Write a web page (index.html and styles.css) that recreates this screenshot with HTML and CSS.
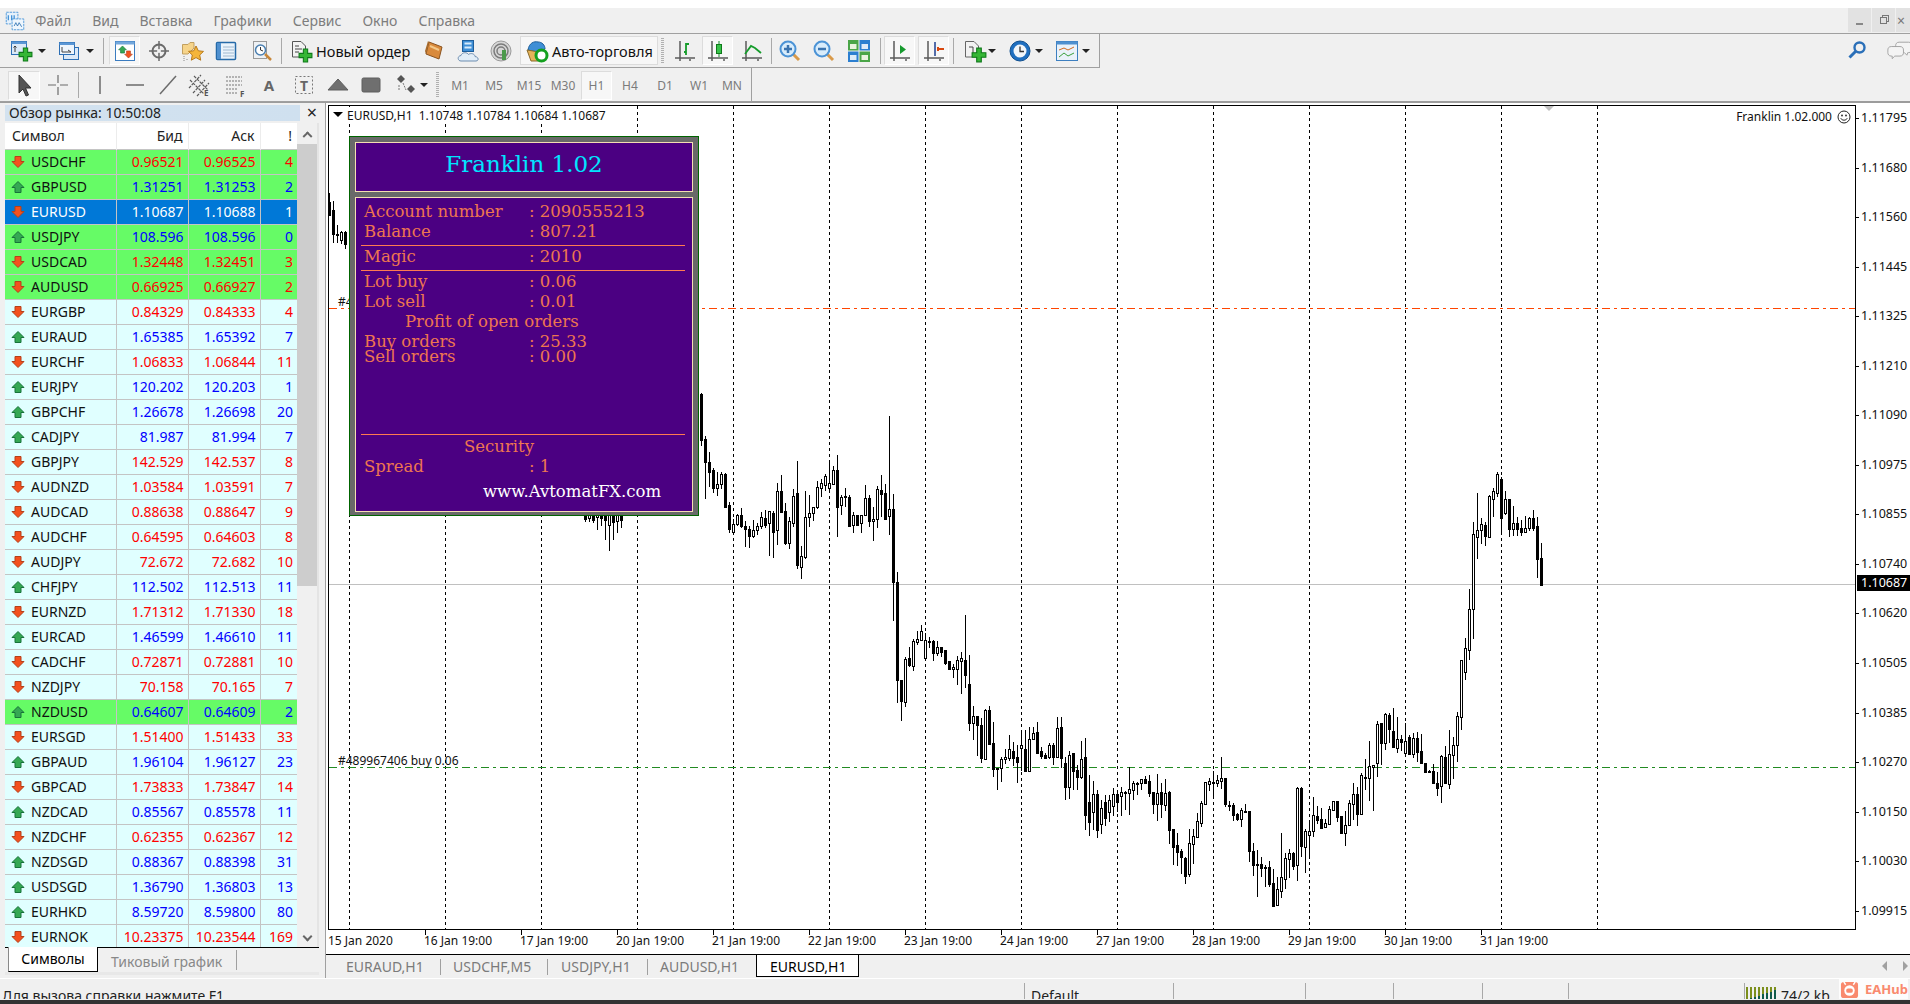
FILE: index.html
```html
<!DOCTYPE html>
<html lang="ru">
<head>
<meta charset="utf-8">
<title>MetaTrader 4</title>
<link rel="stylesheet" href="styles.css">
</head>
<body>
<svg class="defs" aria-hidden="true">
  <defs>
    <symbol id="up" viewBox="0 0 14 14"><path d="M7 1.5 13 7.5H10V12.5H4V7.5H1Z" fill="#35a853" stroke="#17733a"/></symbol>
    <symbol id="dn" viewBox="0 0 14 14"><path d="M4 1.5H10V6.5H13L7 12.5 1 6.5H4Z" fill="#f4511e" stroke="#b5401a"/></symbol>
    <symbol id="plus" viewBox="0 0 14 14"><path d="M5 1H9V5H13V9H9V13H5V9H1V5H5Z" fill="#35b635" stroke="#0f7a1a"/></symbol>
    <symbol id="newchart" viewBox="0 0 24 24"><rect x="1.5" y="2.5" width="15" height="13" fill="#dbe9f8" stroke="#2d6fb5"/><rect x="1.5" y="2.5" width="15" height="2.5" fill="#5b97d5"/><path d="M5 7V13M3.5 8.5 5 7 6.500 8.500" fill="none" stroke="#3a3a3a"/><use href="#plus" x="8" y="8" width="15" height="15"/></symbol>
    <symbol id="profiles" viewBox="0 0 24 24"><rect x="6.500" y="8.500" width="15" height="12" fill="#dbe9f8" stroke="#2d6fb5"/><rect x="2.500" y="3.500" width="15" height="12" fill="#eef5fc" stroke="#2d6fb5"/><rect x="2.500" y="3.500" width="15" height="2.500" fill="#5b97d5"/><path d="M5 8V13H14M11 11 14 13" fill="none" stroke="#444"/></symbol>
    <symbol id="watch" viewBox="0 0 24 24"><rect x="2.500" y="2.500" width="19" height="19" fill="#fff" stroke="#3b7cc0"/><rect x="2.500" y="2.500" width="19" height="3" fill="#74a8dc"/><use href="#up" x="5" y="6" width="9" height="9"/><use href="#dn" x="11" y="11" width="9" height="9"/></symbol>
    <symbol id="nav" viewBox="0 0 24 24"><circle cx="12" cy="12" r="6.500" fill="none" stroke="#6b6b6b" stroke-width="2"/><path d="M12 2V22M2 12H22" stroke="#6b6b6b" stroke-width="1.500"/><circle cx="12" cy="12" r="2" fill="#f0f0f0"/></symbol>
    <symbol id="star" viewBox="0 0 24 24"><path d="M1.500 5.500H7L9 3.500H13V9L7 15H1.500Z" fill="#f6d48a" stroke="#c2a060"/><path d="M15 7 17.300 11.800 22.500 12.400 18.700 16 19.700 21.200 15 18.600 10.300 21.200 11.300 16 7.500 12.400 12.700 11.800Z" fill="#f5b53a" stroke="#b87a1c"/><path d="M3 17V22M6 20V22" stroke="#888" stroke-dasharray="1 1"/></symbol>
    <symbol id="term" viewBox="0 0 24 24"><rect x="2.500" y="3.500" width="19" height="17" rx="1" fill="#eaf3fb" stroke="#256aa8" stroke-width="1.500"/><rect x="3" y="4" width="4" height="16" fill="#4f90cf"/><path d="M9 8H20M9 11H20M9 14H20M9 17H20" stroke="#9fb8cf"/></symbol>
    <symbol id="tester" viewBox="0 0 24 24"><rect x="3.500" y="2.500" width="13" height="17" fill="#eef1f4" stroke="#9a9a9a"/><circle cx="10.500" cy="11" r="5" fill="#fff" stroke="#4a7fb0" stroke-width="1.500"/><path d="M10.500 8V11L13 12" fill="none" stroke="#333"/><path d="M15 15 21 21" stroke="#c8873a" stroke-width="2.500"/></symbol>
    <symbol id="order" viewBox="0 0 24 24"><path d="M3.500 2.500H12L16.500 7V18H3.500Z" fill="#f2f2f2" stroke="#555"/><path d="M6 7H10M6 10H13M6 13H10" stroke="#444"/><use href="#plus" x="9" y="9" width="15" height="15"/></symbol>
    <symbol id="book" viewBox="0 0 24 24"><path d="M7 3 20 8 17 20 4 15Z" fill="#d98a3c" stroke="#8a5320"/><path d="M7 3 4 15 3 12 6 2Z" fill="#a86a2a"/><path d="M8 7 17 11" stroke="#f3c98a" stroke-width="2"/></symbol>
    <symbol id="cloud" viewBox="0 0 24 24"><rect x="6.500" y="1.500" width="11" height="11" fill="#3f8fd6" stroke="#1e5f9c"/><rect x="8.500" y="3.500" width="7" height="2" fill="#d8ecfb"/><rect x="8.500" y="7.500" width="7" height="2" fill="#d8ecfb"/><path d="M5 22C1.500 22 1 17 5 16.500 6 13 11 13 12.500 15.500 15 13.500 19 15 19 17.500 23 18 23 22 20 22Z" fill="#e2eef8" stroke="#6d8db0"/></symbol>
    <symbol id="signal" viewBox="0 0 24 24"><circle cx="12" cy="12" r="10" fill="#d7d7d7" stroke="#9a9a9a"/><circle cx="12" cy="12" r="7" fill="none" stroke="#7b7b7b" stroke-width="1.500"/><circle cx="12" cy="12" r="4" fill="none" stroke="#7b7b7b" stroke-width="1.500"/><path d="M13 11H17V21H13Z" fill="#4c9a4c"/></symbol>
    <symbol id="auto" viewBox="0 0 24 24"><path d="M3 11C4 4 9 2 13 3 17 3 20 6 20 10L12 13Z" fill="#3f8fd6" stroke="#1e5f9c"/><path d="M2 11 14 13 13 22H6Z" fill="#e6b45a" stroke="#8a6a2a"/><circle cx="16.500" cy="16.500" r="5.500" fill="#fff" stroke="#14a01e" stroke-width="3"/></symbol>
    <symbol id="barch" viewBox="0 0 24 24"><path d="M7 2V20M2 19H22M17 20V22M7 20V22" stroke="#5b5b5b" stroke-width="1.500" fill="none"/><path d="M13 16V5H16M11 13H13" stroke="#159c2b" stroke-width="1.800" fill="none"/></symbol>
    <symbol id="candle" viewBox="0 0 24 24"><path d="M6 2V20M2 19H22M6 20V22M18 20V22" stroke="#5b5b5b" stroke-width="1.500" fill="none"/><path d="M13 2V18" stroke="#158a2b"/><rect x="10.500" y="5.500" width="5" height="9" fill="#37c24a" stroke="#0f7a1a"/></symbol>
    <symbol id="linech" viewBox="0 0 24 24"><path d="M6 2V20M2 19H22M6 20V22M18 20V22" stroke="#5b5b5b" stroke-width="1.500" fill="none"/><path d="M5 15 11 7 15 9 21 14" stroke="#159c2b" stroke-width="1.800" fill="none"/></symbol>
    <symbol id="zoomin" viewBox="0 0 24 24"><path d="M14 14 21 21" stroke="#d99a4a" stroke-width="3"/><circle cx="10" cy="10" r="7.500" fill="#d8ecfb" stroke="#4b93d6" stroke-width="2"/><path d="M6 10H14M10 6V14" stroke="#3a74b0" stroke-width="2.500"/></symbol>
    <symbol id="zoomout" viewBox="0 0 24 24"><path d="M14 14 21 21" stroke="#d99a4a" stroke-width="3"/><circle cx="10" cy="10" r="7.500" fill="#d8ecfb" stroke="#4b93d6" stroke-width="2"/><path d="M6 10H14" stroke="#3a74b0" stroke-width="2.500"/></symbol>
    <symbol id="tile" viewBox="0 0 24 24"><rect x="1" y="1" width="10.500" height="10.500" fill="#4aa548"/><rect x="12.500" y="1" width="10.500" height="10.500" fill="#2c7fd0"/><rect x="1" y="12.500" width="10.500" height="10.500" fill="#2c7fd0"/><rect x="12.500" y="12.500" width="10.500" height="10.500" fill="#4aa548"/><rect x="3" y="5" width="6.500" height="5" fill="#e9f3df"/><rect x="14.500" y="5" width="6.500" height="5" fill="#deebf8"/><rect x="3" y="16" width="6.500" height="5" fill="#deebf8"/><rect x="14.500" y="16" width="6.500" height="5" fill="#e9f3df"/></symbol>
    <symbol id="scroll" viewBox="0 0 24 24"><path d="M6 2V20M2 19H22M6 20V22M18 20V22" stroke="#5b5b5b" stroke-width="1.500" fill="none"/><path d="M12 6V15L18 10.500Z" fill="#169a2e"/></symbol>
    <symbol id="shift" viewBox="0 0 24 24"><path d="M6 2V20M2 19H22M6 20V22M18 20V22" stroke="#5b5b5b" stroke-width="1.500" fill="none"/><path d="M13 3V17" stroke="#1e3f90" stroke-width="1.500"/><path d="M22 10H16M16 8V12" stroke="#d9480f" stroke-width="2"/></symbol>
    <symbol id="tmpl" viewBox="0 0 24 24"><path d="M2.500 2.500H11L15.500 7V18H2.500Z" fill="#f2f2f2" stroke="#666"/><path d="M6 8H10V15" fill="none" stroke="#444"/><use href="#plus" x="8" y="8" width="16" height="16"/></symbol>
    <symbol id="clock" viewBox="0 0 24 24"><circle cx="12" cy="12" r="10" fill="#1f6fc0" stroke="#12508f"/><circle cx="12" cy="12" r="6.500" fill="#f2f6fa"/><path d="M12 7.500V12.500H16" fill="none" stroke="#333" stroke-width="1.300"/></symbol>
    <symbol id="indic" viewBox="0 0 24 24"><rect x="1.500" y="2.500" width="21" height="19" fill="#eaf2fa" stroke="#3d7fc0"/><rect x="1.500" y="2.500" width="21" height="3" fill="#4f90cf"/><path d="M4 11 9 9 13 11 19 8" stroke="#d2691e" fill="none"/><path d="M4 18 9 14 13 17 19 14" stroke="#3ca03c" fill="none"/></symbol>
    <symbol id="cursor" viewBox="0 0 24 24"><path d="M7 2V20L11 16 14 23 16.500 22 13.500 15H19Z" fill="#555" stroke="#333"/></symbol>
    <symbol id="cross" viewBox="0 0 24 24"><path d="M12 2V10M12 14V22M2 12H10M14 12H22" stroke="#6b6b6b" stroke-width="1.200"/></symbol>
    <symbol id="vline" viewBox="0 0 24 24"><path d="M12 3V21" stroke="#6b6b6b" stroke-width="1.500"/></symbol>
    <symbol id="hline" viewBox="0 0 24 24"><path d="M3 12H21" stroke="#6b6b6b" stroke-width="1.500"/></symbol>
    <symbol id="trend" viewBox="0 0 24 24"><path d="M4 21 20 3" stroke="#6b6b6b" stroke-width="1.500"/></symbol>
    <symbol id="channel" viewBox="0 0 24 24"><path d="M1 15 13 2M5 20 17 7M9 23 21 10M2 7 16 21M6 3 20 17" stroke="#5b5b5b" stroke-width="1.200" stroke-dasharray="3 1"/><text x="16" y="23" class="ic-t">E</text></symbol>
    <symbol id="fibo" viewBox="0 0 24 24"><path d="M2 4H18M2 8H18M2 12H18M2 16H14M2 20H14" stroke="#777" stroke-dasharray="2 1" stroke-width="1.200"/><text x="16" y="24" class="ic-t">F</text></symbol>
    <symbol id="tframe" viewBox="0 0 24 24"><rect x="3.500" y="3.500" width="17" height="17" fill="none" stroke="#777" stroke-dasharray="2 2"/><text x="12" y="18" class="ic-b">T</text></symbol>
    <symbol id="triang" viewBox="0 0 24 24"><path d="M12 6 22 17H2Z" fill="#6f6f6f" stroke="#5f5f5f"/></symbol>
    <symbol id="rectg" viewBox="0 0 24 24"><rect x="3" y="5" width="18" height="14" rx="1.500" fill="#6f6f6f" stroke="#5f5f5f"/></symbol>
    <symbol id="arrows" viewBox="0 0 24 24"><path d="M7 2 11 6 7 10 3 6Z" fill="#555"/><path d="M17 12 21 16 17 20 13 16Z" fill="#555"/><path d="M9 10 12 17M5 12V18" stroke="#777" stroke-dasharray="2 1"/></symbol>
    <symbol id="logo" viewBox="0 0 24 24"><rect x="1.500" y="1.500" width="14" height="14" fill="#e6f1fb" stroke="#3f8fd6" stroke-dasharray="3 1"/><path d="M4 5V11M8 5V11M11 5V11" stroke="#3f8fd6" stroke-width="1.500"/><rect x="8.500" y="9.500" width="14" height="13" fill="#eef6fd" stroke="#3f8fd6" stroke-dasharray="3 1"/><path d="M11 18 13 14 15 18 17 14 20 19" fill="none" stroke="#2a6fb0"/></symbol>
    <symbol id="loupe" viewBox="0 0 20 20"><circle cx="12.500" cy="7.500" r="5" fill="none" stroke="#2a6fb8" stroke-width="2.400"/><path d="M8.500 11.500 2.500 17.500" stroke="#2a6fb8" stroke-width="3"/></symbol>
    <symbol id="chat" viewBox="0 0 30 22"><path d="M14 2H25C28 2 29 4 29 6V10C29 12 28 14 25 14H24L23 17 20 14H14C11 14 10 12 10 10V6C10 4 11 2 14 2Z" fill="#f4f4f4" stroke="#9a9a9a"/><path d="M5 7H15C18 7 19 9 19 11V14C19 16 18 18 15 18H9L6 21V18H5C2 18 1 16 1 14V11C1 9 2 7 5 7Z" fill="#f4f4f4" stroke="#9a9a9a"/></symbol>
    <symbol id="smile" viewBox="0 0 14 14"><circle cx="7" cy="7" r="6" fill="none" stroke="#222"/><circle cx="5" cy="5.500" r=".9" fill="#222"/><circle cx="9" cy="5.500" r=".9" fill="#222"/><path d="M3.800 8.300C5 10.800 9 10.800 10.200 8.300" fill="none" stroke="#222"/></symbol>
  </defs>
</svg>

<div class="topgap"></div>

<header class="menubar">
  <svg class="mlogo"><use href="#logo"/></svg>
  <nav class="menu">
    <span>Файл</span><span>Вид</span><span>Вставка</span><span>Графики</span><span>Сервис</span><span>Окно</span><span>Справка</span>
  </nav>
  <div class="winbtns">
    <span class="wb wb-min"></span>
    <span class="wb"><i class="restore"></i></span>
    <span class="wb wb-x">×</span>
  </div>
</header>

<div class="tbrow">
  <div class="toolbar tb1">
    <svg class="ic"><use href="#newchart"/></svg><i class="dd"></i>
    <svg class="ic m7"><use href="#profiles"/></svg><i class="dd m1"></i>
    <i class="sep m8"></i>
    <span class="tog m5"><svg class="gl"><use href="#watch"/></svg></span>
    <svg class="ic m4"><use href="#nav"/></svg>
    <svg class="ic m4"><use href="#star"/></svg>
    <svg class="ic m3"><use href="#term"/></svg>
    <svg class="ic m6"><use href="#tester"/></svg>
    <i class="sep m4"></i>
    <svg class="gl m7"><use href="#order"/></svg><span class="tbtext order-t">Новый ордер</span>
    <svg class="ic m9"><use href="#book"/></svg>
    <svg class="ic m4"><use href="#cloud"/></svg>
    <svg class="ic m3"><use href="#signal"/></svg>
    <span class="autobtn m4"><svg class="gl"><use href="#auto"/></svg><span class="tbtext">Авто-торговля</span></span>
    <i class="grip m3"></i>
    <svg class="ic m6"><use href="#barch"/></svg>
    <span class="tog m2"><svg class="gl"><use href="#candle"/></svg></span>
    <svg class="ic m4"><use href="#linech"/></svg>
    <i class="sep m4"></i>
    <svg class="ic m3"><use href="#zoomin"/></svg>
    <svg class="ic m4"><use href="#zoomout"/></svg>
    <svg class="ic m5"><use href="#tile"/></svg>
    <i class="sep m6"></i>
    <span class="tog m3"><svg class="gl"><use href="#scroll"/></svg></span>
    <span class="tog m3"><svg class="gl"><use href="#shift"/></svg></span>
    <i class="sep m4"></i>
    <svg class="ic m6"><use href="#tmpl"/></svg><i class="dd n3"></i>
    <svg class="ic m8"><use href="#clock"/></svg><i class="dd n1"></i>
    <svg class="ic m8"><use href="#indic"/></svg><i class="dd n1"></i>
  </div>
  <div class="tbright">
    <svg class="loupe"><use href="#loupe"/></svg>
    <svg class="chat"><use href="#chat"/></svg>
  </div>
</div>

<div class="tbrow tbrow2">
  <div class="toolbar tb2">
    <span class="tog tog32"><svg class="gl"><use href="#cursor"/></svg></span>
    <svg class="ic m3"><use href="#cross"/></svg>
    <i class="sep m5"></i>
    <svg class="ic m6"><use href="#vline"/></svg>
    <svg class="ic m5"><use href="#hline"/></svg>
    <svg class="ic m3"><use href="#trend"/></svg>
    <svg class="ic m2"><use href="#channel"/></svg>
    <svg class="ic m6"><use href="#fibo"/></svg>
    <span class="ic txtic m3">A</span>
    <svg class="ic m5"><use href="#tframe"/></svg>
    <svg class="ic m4"><use href="#triang"/></svg>
    <svg class="ic m3"><use href="#rectg"/></svg>
    <svg class="ic m5"><use href="#arrows"/></svg><i class="dd n2"></i>
    <i class="grip m7"></i>
    <span class="tf m6">M1</span>
    <span class="tf m4">M5</span>
    <span class="tf m5">M15</span>
    <span class="tf m4">M30</span>
    <span class="tog tf m3">H1</span>
    <span class="tf m3">H4</span>
    <span class="tf m5">D1</span>
    <span class="tf m4">W1</span>
    <span class="tf m3">MN</span>
  </div>
</div>

<main class="main">
  <aside class="side">
    <div class="side-title">
      <span class="side-cap">Обзор рынка: 10:50:08</span>
      <span class="side-close">×</span>
    </div>
    <div class="side-body">
      <div class="listwrap">
        <table class="mw">
          <thead><tr><th class="c-s">Символ</th><th>Бид</th><th>Аск</th><th class="c-n">!</th></tr></thead>
          <tbody>
            <tr class="hl d"><td><svg class="ar"><use href="#dn"/></svg>USDCHF</td><td>0.96521</td><td>0.96525</td><td>4</td></tr>
            <tr class="hl u"><td><svg class="ar"><use href="#up"/></svg>GBPUSD</td><td>1.31251</td><td>1.31253</td><td>2</td></tr>
            <tr class="sel"><td><svg class="ar"><use href="#dn"/></svg>EURUSD</td><td>1.10687</td><td>1.10688</td><td>1</td></tr>
            <tr class="hl u"><td><svg class="ar"><use href="#up"/></svg>USDJPY</td><td>108.596</td><td>108.596</td><td>0</td></tr>
            <tr class="hl d"><td><svg class="ar"><use href="#dn"/></svg>USDCAD</td><td>1.32448</td><td>1.32451</td><td>3</td></tr>
            <tr class="hl d"><td><svg class="ar"><use href="#dn"/></svg>AUDUSD</td><td>0.66925</td><td>0.66927</td><td>2</td></tr>
            <tr class="d"><td><svg class="ar"><use href="#dn"/></svg>EURGBP</td><td>0.84329</td><td>0.84333</td><td>4</td></tr>
            <tr class="u"><td><svg class="ar"><use href="#up"/></svg>EURAUD</td><td>1.65385</td><td>1.65392</td><td>7</td></tr>
            <tr class="d"><td><svg class="ar"><use href="#dn"/></svg>EURCHF</td><td>1.06833</td><td>1.06844</td><td>11</td></tr>
            <tr class="u"><td><svg class="ar"><use href="#up"/></svg>EURJPY</td><td>120.202</td><td>120.203</td><td>1</td></tr>
            <tr class="u"><td><svg class="ar"><use href="#up"/></svg>GBPCHF</td><td>1.26678</td><td>1.26698</td><td>20</td></tr>
            <tr class="u"><td><svg class="ar"><use href="#up"/></svg>CADJPY</td><td>81.987</td><td>81.994</td><td>7</td></tr>
            <tr class="d"><td><svg class="ar"><use href="#dn"/></svg>GBPJPY</td><td>142.529</td><td>142.537</td><td>8</td></tr>
            <tr class="d"><td><svg class="ar"><use href="#dn"/></svg>AUDNZD</td><td>1.03584</td><td>1.03591</td><td>7</td></tr>
            <tr class="d"><td><svg class="ar"><use href="#dn"/></svg>AUDCAD</td><td>0.88638</td><td>0.88647</td><td>9</td></tr>
            <tr class="d"><td><svg class="ar"><use href="#dn"/></svg>AUDCHF</td><td>0.64595</td><td>0.64603</td><td>8</td></tr>
            <tr class="d"><td><svg class="ar"><use href="#dn"/></svg>AUDJPY</td><td>72.672</td><td>72.682</td><td>10</td></tr>
            <tr class="u"><td><svg class="ar"><use href="#up"/></svg>CHFJPY</td><td>112.502</td><td>112.513</td><td>11</td></tr>
            <tr class="d"><td><svg class="ar"><use href="#dn"/></svg>EURNZD</td><td>1.71312</td><td>1.71330</td><td>18</td></tr>
            <tr class="u"><td><svg class="ar"><use href="#up"/></svg>EURCAD</td><td>1.46599</td><td>1.46610</td><td>11</td></tr>
            <tr class="d"><td><svg class="ar"><use href="#dn"/></svg>CADCHF</td><td>0.72871</td><td>0.72881</td><td>10</td></tr>
            <tr class="d"><td><svg class="ar"><use href="#dn"/></svg>NZDJPY</td><td>70.158</td><td>70.165</td><td>7</td></tr>
            <tr class="hl u"><td><svg class="ar"><use href="#up"/></svg>NZDUSD</td><td>0.64607</td><td>0.64609</td><td>2</td></tr>
            <tr class="d"><td><svg class="ar"><use href="#dn"/></svg>EURSGD</td><td>1.51400</td><td>1.51433</td><td>33</td></tr>
            <tr class="u"><td><svg class="ar"><use href="#up"/></svg>GBPAUD</td><td>1.96104</td><td>1.96127</td><td>23</td></tr>
            <tr class="d"><td><svg class="ar"><use href="#dn"/></svg>GBPCAD</td><td>1.73833</td><td>1.73847</td><td>14</td></tr>
            <tr class="u"><td><svg class="ar"><use href="#up"/></svg>NZDCAD</td><td>0.85567</td><td>0.85578</td><td>11</td></tr>
            <tr class="d"><td><svg class="ar"><use href="#dn"/></svg>NZDCHF</td><td>0.62355</td><td>0.62367</td><td>12</td></tr>
            <tr class="u"><td><svg class="ar"><use href="#up"/></svg>NZDSGD</td><td>0.88367</td><td>0.88398</td><td>31</td></tr>
            <tr class="u"><td><svg class="ar"><use href="#up"/></svg>USDSGD</td><td>1.36790</td><td>1.36803</td><td>13</td></tr>
            <tr class="u"><td><svg class="ar"><use href="#up"/></svg>EURHKD</td><td>8.59720</td><td>8.59800</td><td>80</td></tr>
            <tr class="d"><td><svg class="ar"><use href="#dn"/></svg>EURNOK</td><td>10.23375</td><td>10.23544</td><td>169</td></tr>
          </tbody>
        </table>
      </div>
      <div class="vscroll">
        <span class="sb-btn"><i class="chev chev-up"></i></span>
        <span class="sb-thumb"></span>
        <span class="sb-track"></span>
        <span class="sb-btn"><i class="chev chev-dn"></i></span>
      </div>
    </div>
    <div class="side-tabs">
      <span class="stab stab-on">Символы</span>
      <span class="stab">Тиковый график</span>
    </div>
  </aside>

  <section class="workspace">
    <div class="chartwrap">
      <div class="chartrow">
        <div class="plot">
          <svg id="chart" class="chart" viewBox="329 106 1526 823"></svg>
          <i class="ctri"></i>
          <span class="cinfo">EURUSD,H1&nbsp; 1.10748 1.10784 1.10684 1.10687</span>
          <i class="chandle"></i>
          <span class="ea">Franklin 1.02.000 <svg class="smile"><use href="#smile"/></svg></span>
          <div class="panel">
            <div class="p-title">Franklin 1.02</div>
            <div class="p-body">
              <div class="ln"><span>Account number</span><span>: 2090555213</span></div>
              <div class="ln"><span>Balance</span><span>: 807.21</span></div>
              <hr class="rl r1">
              <div class="ln l-a"><span>Magic</span><span>: 2010</span></div>
              <hr class="rl r1">
              <div class="ln l-a"><span>Lot buy</span><span>: 0.06</span></div>
              <div class="ln"><span>Lot sell</span><span>: 0.01</span></div>
              <div class="ln l-c1">Profit of open orders</div>
              <div class="ln"><span>Buy orders</span><span>: 25.33</span></div>
              <div class="ln l-tight"><span>Sell orders</span><span>: 0.00</span></div>
              <hr class="rl r2">
              <div class="ln l-sec">Security</div>
              <div class="ln"><span>Spread</span><span>: 1</span></div>
              <div class="ln l-www">www.AvtomatFX.com</div>
            </div>
          </div>
        </div>
        <div class="axis">
          <span>1.11795</span><span>1.11680</span><span>1.11560</span><span>1.11445</span><span>1.11325</span><span>1.11210</span><span>1.11090</span><span>1.10975</span><span>1.10855</span><span>1.10740</span><span>1.10620</span><span>1.10505</span><span>1.10385</span><span>1.10270</span><span>1.10150</span><span>1.10030</span><span>1.09915</span>
          <b class="lastprice">1.10687</b>
        </div>
      </div>
      <div class="timeaxis">
        <span>15 Jan 2020</span><span>16 Jan 19:00</span><span>17 Jan 19:00</span><span>20 Jan 19:00</span><span>21 Jan 19:00</span><span>22 Jan 19:00</span><span>23 Jan 19:00</span><span>24 Jan 19:00</span><span>27 Jan 19:00</span><span>28 Jan 19:00</span><span>29 Jan 19:00</span><span>30 Jan 19:00</span><span>31 Jan 19:00</span>
      </div>
    </div>
    <div class="ctabs">
      <span class="ctab t-a">EURAUD,H1</span>
      <span class="ctab t-b">USDCHF,M5</span>
      <span class="ctab t-c">USDJPY,H1</span>
      <span class="ctab t-d">AUDUSD,H1</span>
      <span class="ctab ctab-on">EURUSD,H1</span>
      <span class="ctab-arrows"><i class="tarr tarr-l"></i><i class="tarr tarr-r"></i></span>
    </div>
  </section>
</main>

<footer class="status">
  <span class="st st-help">Для вызова справки нажмите F1</span>
  <span class="st st-def">Default</span>
  <span class="st st-a"></span>
  <span class="st st-b"></span>
  <span class="st st-c"></span>
  <span class="st st-d"></span>
  <span class="st st-e"></span>
  <span class="st st-net">
    <svg class="netbars" viewBox="0 0 32 14"><path d="M1 0H3V14H1ZM5 0H7V14H5ZM9 0H11V14H9ZM13 0H15V14H13ZM17 0H19V14H17ZM21 0H23V14H21ZM25 0H27V14H25ZM29 0H31V14H29Z" fill="#7c8f1c"/><path d="M1 12H3V14H1ZM5 11H7V14H5ZM9 10H11V14H9ZM13 9H15V14H13ZM17 7H19V14H17ZM21 6H23V14H21ZM25 5H27V14H25ZM29 3H31V14H29Z" fill="#0f5a4a"/></svg>
    74/2 kb
  </span>
  <span class="wm">
    <svg class="wm-i" viewBox="0 0 20 20"><rect x="1" y="2" width="18" height="17" rx="3" fill="#f98a6e"/><circle cx="10" cy="11" r="5.500" fill="#fff"/><rect x="6.500" y="9" width="7" height="4.500" rx="2" fill="#f98a6e"/><path d="M4 2 6 5M16 2 14 5" stroke="#fff" stroke-width="1.500"/></svg>
    <span class="wm-t">EAHub</span>
  </span>
</footer>
<div class="bottombar"></div>
<script src="script.js"></script>
</body>
</html>
```

FILE: styles.css
```css
* { box-sizing: border-box; }
html, body { margin: 0; padding: 0; width: 1910px; height: 1004px; overflow: hidden; }
body { background: #f0f0f0; font-family: "Noto Sans", "DejaVu Sans", sans-serif; color: #000; position: relative; }
.defs { position: absolute; width: 0; height: 0; }
.ic-t { font: bold 8px "Noto Sans", sans-serif; fill: #555; }
.ic-b { font: bold 14px "Noto Sans", sans-serif; fill: #666; text-anchor: middle; }

.topgap { height: 8px; background: #fff; }

.menubar { height: 26px; display: flex; align-items: center; background: #f0f0f0; border-bottom: 1px solid #a0a0a0; }
.mlogo { width: 20px; height: 20px; margin-left: 5px; flex: none; }
.menu { display: flex; gap: 21px; margin-left: 10px; font-size: 14px; color: #7d7d7d; flex: 1; }
.winbtns { display: flex; gap: 1px; align-self: flex-start; height: 24px; }
.wb { width: 23px; height: 24px; background: #e2e2e2; display: flex; align-items: center; justify-content: center; color: #777; font-size: 14px; position: relative; }
.wb-x { width: 14px; justify-content: flex-start; padding-left: 1px; }
.wb-min::after { content: ""; width: 7px; height: 2px; background: #888; margin-top: 7px; }
.restore { width: 7px; height: 7px; border: 1px solid #777; display: block; box-shadow: 2px -2px 0 -1px #e2e2e2, 2px -2px 0 0 #777; }

.tbrow { height: 34px; display: flex; justify-content: space-between; align-items: stretch; }
.tbrow2 { height: 34px; }
.toolbar { display: flex; align-items: center; border-right: 1px solid #a0a0a0; border-bottom: 1px solid #a0a0a0; }
.tb1 { width: 1100px; padding-left: 7px; }
.tb2 { width: 752px; padding: 1px 0 0 8px; }
.tbright { display: flex; align-items: center; padding-bottom: 2px; }
.loupe { width: 20px; height: 20px; margin-right: 20px; }
.chat { width: 26px; height: 20px; margin-right: -3px; }

.ic { width: 30px; height: 24px; flex: none; display: block; }
.gl { width: 24px; height: 24px; flex: none; display: block; }
.txtic { font-weight: 700; font-size: 15px; line-height: 24px; text-align: center; color: #666; }
.tog { width: 31px; height: 29px; flex: none; display: flex; align-items: center; justify-content: center; background: #f7f7f7; border: 1px solid #dcdcdc; border-right-color: #fff; border-bottom-color: #fff; }
.tog32 { width: 32px; }
.dd { width: 10px; height: 10px; flex: none; position: relative; display: block; }
.dd::after { content: ""; position: absolute; left: 1px; top: 3px; border: 4px solid transparent; border-top: 4px solid #222; border-bottom: 0; }
.sep { width: 1px; height: 26px; background: #a9a9a9; flex: none; display: block; }
.grip { width: 3px; height: 26px; flex: none; display: block; background: repeating-linear-gradient(#b0b0b0 0 1px, transparent 1px 2px); }
.tbtext { font-size: 14.500px; color: #111; white-space: nowrap; }
.order-t { width: 94px; margin-left: 3px; }
.autobtn { width: 138px; height: 29px; display: flex; align-items: center; gap: 3px; padding-left: 4px; background: #f7f7f7; border: 1px solid #dcdcdc; flex: none; }
.tf { width: 30px; height: 29px; flex: none; text-align: center; line-height: 29px; font-size: 12px; color: #7b7b7b; display: block; }
.tf.tog { width: 31px; display: block; line-height: 27px; }

.m1 { margin-left: 1px; } .m2 { margin-left: 2px; } .m3 { margin-left: 3px; } .m4 { margin-left: 4px; }
.m5 { margin-left: 5px; } .m6 { margin-left: 6px; } .m7 { margin-left: 7px; } .m8 { margin-left: 8px; } .m9 { margin-left: 9px; }
.n1 { margin-left: -1px; } .n2 { margin-left: -2px; } .n3 { margin-left: -3px; }

.main { display: flex; height: 877px; margin-top: -1px; border-top: 2px solid #9c9c9c; }

.side { width: 325px; flex: none; padding: 2px 0 0 5px; display: flex; flex-direction: column; }
.side-title { height: 18px; display: flex; flex: none; }
.side-cap { width: 295px; height: 16px; background: linear-gradient(90deg, #d3e2ef, #cfe0ef); font-size: 14px; line-height: 16px; padding-left: 4px; color: #222; }
.side-close { margin-left: 5px; width: 14px; text-align: center; font-size: 18px; line-height: 15px; color: #222; }
.side-body { height: 824px; display: flex; flex: none; width: 314px; border-right: 2px solid #e4e4e4; }
.listwrap { width: 292px; height: 824px; overflow: hidden; background: #fff; flex: none; }
.mw { border-collapse: collapse; table-layout: fixed; width: 292px; font-size: 14px; }
.mw th { height: 26px; padding: 0 5px 0 0; font-weight: 400; text-align: right; background: #fff; border-right: 1px solid #ececec; color: #222; width: 72px; }
.mw th.c-s { width: 111px; text-align: left; padding-left: 7px; }
.mw th.c-n { width: 37px; border-right: 0; }
.mw td { height: 25px; padding: 0 4px 0 0; text-align: right; border: 1px solid #c4c4c4; border-left: 0; border-bottom: 0; white-space: nowrap; overflow: hidden; background: #e0ffff; line-height: 24px; }
.mw td:first-child { text-align: left; padding-left: 6px; color: #111; }
.mw td:last-child { border-right: 0; }
.mw .hl td { background: #66fb66; }
.mw .d td { color: #f00; }
.mw .u td { color: #00f; }
.mw .d td:first-child, .mw .u td:first-child { color: #111; }
.mw .sel td { background: #0078d7; color: #fff; }
.mw .sel td:first-child { color: #fff; }
.ar { width: 14px; height: 14px; vertical-align: -2px; margin-right: 6px; }

.vscroll { width: 20px; display: flex; flex-direction: column; background: #f0f0f0; }
.sb-btn { height: 21px; display: flex; align-items: center; justify-content: center; flex: none; }
.sb-thumb { height: 442px; flex: none; background: #cdcdcd; }
.sb-track { flex: 1; }
.chev { width: 7px; height: 7px; border-left: 2px solid #666; border-top: 2px solid #666; display: block; }
.chev-up { transform: rotate(45deg) translate(2px, 2px); }
.chev-dn { transform: rotate(225deg); }

.side-tabs { height: 28px; width: 314px; flex: none; display: flex; border-top: 1px solid #000; border-bottom: 3px solid #e8e8e8; font-size: 14px; color: #888; }
.stab { padding: 0 14px 0 13px; line-height: 23px; border-right: 1px solid #a0a0a0; height: 20px; margin-top: 2px; }
.stab-on { width: 90px; padding: 0; margin: -1px 0 0 3px; height: 25px; line-height: 24px; text-align: center; background: #fff; color: #000; border: 1px solid #000; border-top: 0; border-left-color: #888; }

.workspace { flex: 1; display: flex; flex-direction: column; border-left: 1px solid #a0a0a0; min-width: 0; }
.chartwrap { height: 851px; flex: none; background: #fff; padding: 2px 0 0 2px; }
.chartrow { display: flex; height: 825px; }
.plot { width: 1528px; height: 825px; border: 1px solid #000; position: relative; flex: none; overflow: hidden; }
.chart { display: block; width: 1526px; height: 823px; font: 12px "Noto Sans", sans-serif; shape-rendering: crispEdges; }
.chart .vg { stroke: #000; stroke-width: 1; stroke-dasharray: 3 3; }
.chart .pl { stroke: #c0c0c0; stroke-width: 1; }
.chart .sl { stroke: #ff4500; stroke-width: 1; stroke-dasharray: 8 4 3 4; }
.chart .bl { stroke: #228b22; stroke-width: 1; stroke-dasharray: 8 4 3 4; }
.chart .cb { fill: #000; }
.chart .cw { fill: #fff; }
.chart .ot { fill: #111; }
.ctri { position: absolute; left: 4px; top: 6px; border: 5px solid transparent; border-top: 5px solid #000; border-bottom: 0; }
.cinfo { position: absolute; left: 18px; top: 1px; font-size: 12px; line-height: 17px; white-space: nowrap; background: #fff; color: #111; }
.chandle { position: absolute; left: 1214px; top: -1px; border: 6px solid transparent; border-top: 6px solid #c0c0c0; border-bottom: 0; }
.ea { position: absolute; right: 4px; top: 2px; font-size: 12px; line-height: 17px; color: #111; display: flex; align-items: center; gap: 5px; background: #fff; }
.smile { width: 14px; height: 14px; }

.panel { position: absolute; left: 20px; top: 30px; width: 350px; height: 380px; background: #696969; border: 1px solid #006400; padding: 5px 5px 3px; color: #ee7650; font-family: "DejaVu Serif", "Liberation Serif", serif; font-size: 16.500px; }
.p-title { height: 50px; background: #4b0082; border: 1px solid #f5deb3; color: #00e5ff; text-align: center; font-size: 23px; line-height: 42px; }
.p-body { height: 315px; margin-top: 5px; background: #4b0082; border: 1px solid #f5deb3; padding: 4px 6px 0 5px; display: flex; flex-direction: column; }
.ln { height: 20px; line-height: 20px; display: flex; flex: none; white-space: nowrap; padding-left: 3px; }
.ln span:first-child { width: 165px; }
.l-a { margin-top: 1px; }
.l-c1 { padding-left: 44px; }
.l-tight { margin-top: -5px; }
.l-sec { margin-top: 2px; padding-left: 103px; }
.l-www { margin-top: 5px; padding-left: 122px; color: #fff; }
.rl { flex: none; border: 0; height: 1px; margin: 3px 0 0; background: #ff7a50; width: 324px; }
.r2 { margin-top: 67px; }

.axis { width: 54px; height: 825px; padding-top: 2px; display: flex; flex-direction: column; position: relative; font-size: 12.500px; flex: none; }
.axis span { height: 49.550px; flex: none; padding-left: 5px; line-height: 22px; position: relative; color: #111; }
.axis span::before { content: ""; position: absolute; left: 0; top: 11px; width: 3px; height: 1px; background: #000; }
.lastprice { position: absolute; left: 1px; top: 470px; width: 53px; height: 16px; background: #000; color: #fff; font-weight: 400; line-height: 16px; padding-left: 4px; }

.timeaxis { display: flex; height: 24px; font-size: 12px; color: #111; }
.timeaxis span { width: 96px; flex: none; line-height: 22px; position: relative; white-space: nowrap; }
.timeaxis span:not(:first-child)::before { content: ""; position: absolute; left: 1px; top: 0; width: 1px; height: 5px; background: #000; }

.ctabs { height: 24px; flex: none; border-top: 1px solid #000; display: flex; font-size: 14px; color: #7b7b7b; position: relative; padding-left: 7px; }
.ctab { height: 16px; margin-top: 4px; padding-left: 13px; line-height: 15px; border-right: 1px solid #a0a0a0; white-space: nowrap; flex: none; }
.t-a { width: 108px; }
.t-b { width: 107px; padding-left: 12px; }
.t-c { width: 100px; }
.t-d { width: 108px; padding-left: 12px; border-right: 0; }
.ctab-on { width: 103px; height: 23px; margin-top: -1px; line-height: 23px; background: #fff; color: #000; border: 1px solid #000; }
.ctab-arrows { position: absolute; right: 2px; top: 6px; display: flex; gap: 16px; }
.tarr { display: block; border: 5px solid transparent; }
.tarr-l { border-right-color: #a0a0a0; border-left: 0; }
.tarr-r { border-left-color: #a0a0a0; border-right: 0; }

.status { height: 21px; border-top: 1px solid #fff; display: flex; font-size: 14px; color: #222; overflow: hidden; position: relative; background: #f0f0f0; }
.st { height: 20px; padding: 4px 0 0 6px; line-height: 18px; border-left: 1px solid #a8a8a8; margin-top: 4px; white-space: nowrap; flex: none; }
.st-help { width: 1024px; border-left: 0; padding-left: 2px; }
.st-def { width: 149px; }
.st-a { width: 132px; } .st-b { width: 88px; } .st-c { width: 89px; } .st-d { width: 86px; }
.st-e { width: 176px; }
.st-net { width: 98px; padding-left: 0; display: flex; gap: 4px; }
.netbars { width: 32px; height: 14px; flex: none; }
.wm { position: absolute; right: 2px; top: 0; width: 69px; height: 20px; background: rgba(255,255,255,.85); display: flex; align-items: center; gap: 6px; padding-left: 1px; }
.wm-i { width: 19px; height: 19px; flex: none; }
.wm-t { color: #f98a6e; font-weight: 700; font-size: 13px; }
.bottombar { height: 4px; background: #333; position: absolute; left: 0; right: 0; bottom: 0; }
```

FILE: script.js
```js
// Candles of the EURUSD,H1 chart. Each row: [x, high, top, bottom, low, filled].
// Groups are read in their own scale: page = origin + value / scale.
var groups = [
  { ox: 325, oy: 100, s: 3, rows: [
    [12,280,305,346,346,1],[24,304,330,403,428,1],[36,376,403,404,430,0],[48,392,395,420,432,0],[60,394,397,432,448,1]
  ]},
  { ox: 0, oy: 0, s: 1, rows: [
    [585,500,500,519,522,1],[589,500,500,518,522,0],[593,500,500,520,523,1],[597,500,500,517,530,0],[601,500,500,518,526,1],
    [605,500,500,520,540,1],[609,500,500,525,551,0],[613,500,500,522,540,1],[617,500,500,521,533,0],[621,500,500,520,528,1],
    [701,393,394,440,446,1]
  ]},
  { ox: 700, oy: 400, s: 3, rows: [
    [16,108,118,185,296,1],[28,156,186,215,262,1],[40,205,210,263,278,1],[52,215,253,263,288,0],[64,216,223,253,266,0],[76,218,223,320,320,1],
    [88,307,316,386,398,1],[100,358,373,395,402,0],[112,342,345,373,378,0],[124,324,346,378,384,1],[136,362,378,386,440,1],[148,378,388,407,444,1],
    [160,360,391,407,414,0],[172,370,379,391,404,0],[184,336,352,378,386,0],[196,330,355,375,384,1],[208,334,334,370,468,0],[220,334,340,395,474,1],
    [232,250,274,391,434,0],[244,226,274,335,340,1],[256,310,334,428,436,1],[268,350,364,430,446,0],[280,268,289,370,382,0],[292,184,280,494,506,1],
    [304,438,467,500,536,0],[316,274,352,470,476,0],[328,286,338,352,380,0],[340,322,322,338,362,0],[352,244,262,322,328,0],[364,238,250,265,292,0],
    [376,222,229,254,272,0],[388,186,250,265,274,0],[400,198,211,253,253,0],[412,166,211,320,412,1],[424,286,292,314,344,0],[436,264,289,290,320,0],
    [448,286,292,378,380,1],[460,336,346,376,398,0],[472,346,346,375,376,1],[484,346,346,370,398,0],[496,256,295,346,346,0],[508,286,295,362,382,1],
    [520,322,356,362,422,0],[532,258,267,358,384,0],[544,226,271,281,352,1],[556,252,280,356,356,1],[568,48,328,347,404,0],[580,282,328,545,662,1],
    [592,516,547,840,910,1],[604,840,840,902,962,1],[616,770,778,905,920,0],[628,742,775,794,800,1],[640,718,724,797,812,0],[652,694,718,725,734,0],
    [664,676,694,719,724,0],[676,700,721,773,778,0],[688,712,724,725,744,0],[700,720,724,758,782,1],[712,724,742,758,768,0],[724,742,742,756,770,1],
    [736,750,750,790,794,1],[748,784,784,806,806,1],[760,792,802,808,834,0],[772,768,781,806,856,0],[784,756,775,784,882,0],[796,646,781,824,864,1],
    [808,766,853,968,992,1],[820,918,949,970,1020,0],[832,948,949,974,1068,1],[844,954,976,1074,1090,1],[856,928,931,1077,1080,0],[868,918,931,1032,1036,1],
    [880,966,1030,1108,1130,1],[892,1104,1105,1106,1170,0],[904,1070,1078,1103,1146,0],[916,1046,1070,1078,1092,0],[928,1006,1048,1074,1082,0],[940,1026,1053,1074,1098,1],
    [952,1034,1072,1086,1148,1],[964,1000,1036,1043,1114,0],[976,990,1048,1112,1112,1],[988,982,1016,1112,1112,0],[1000,982,998,1016,1020,0],[1012,966,997,1058,1058,1],
    [1024,1040,1054,1068,1076,1],[1036,1060,1066,1073,1076,1],[1048,1030,1034,1072,1078,0],[1060,1028,1034,1072,1094,1],[1072,950,985,1071,1074,0],[1084,950,982,1074,1104,1],
    [1096,1072,1090,1160,1200,1],[1108,1054,1066,1160,1196,0],[1120,1058,1060,1112,1170,1],[1132,1096,1110,1130,1170,1],[1144,1024,1078,1130,1136,0],[1156,1014,1072,1245,1290,1]
  ]},
  { ox: 0, oy: 0, s: 1, rows: [
    [1089,775,802,822,836,1],[1093,781,794,812,830,0],[1097,790,794,830,838,1],[1101,800,808,824,834,0],[1105,795,802,818,826,1],[1109,795,800,812,822,0],
    [1113,788,794,806,816,0],[1117,790,794,802,812,1],[1121,787,792,796,816,0],[1125,791,792,793,810,0],[1129,767,789,793,815,0],[1133,781,783,790,800,0],[1137,782,783,784,795,0],
    [1461,660,672,717,730,0],[1465,638,648,672,680,0],[1469,589,609,650,660,0]
  ]},
  { ox: 1140, oy: 680, s: 3, rows: [
    [3,296,298,310,330,0],[15,288,298,308,308,1],[27,286,304,338,352,1],[39,336,336,372,402,1],[51,282,338,372,422,0],[63,308,337,372,414,1],
    [75,296,340,374,392,0],[87,334,337,449,492,1],[99,446,448,500,554,1],[111,460,496,516,558,1],[123,506,512,530,582,1],[135,530,535,587,612,1],
    [147,447,490,581,590,0],[159,446,469,491,552,0],[171,400,424,470,470,0],[183,362,370,428,440,0],[195,306,306,371,371,0],[207,294,304,311,332,0],
    [219,272,306,308,354,0],[231,286,301,308,320,0],[243,232,295,302,326,0],[255,295,295,372,380,1],[267,364,376,377,392,0],[279,370,376,404,422,1],
    [291,398,402,416,424,1],[303,384,391,416,440,0],[315,372,394,395,398,0],[327,394,394,512,546,1],[339,490,514,555,587,1],[351,510,552,553,650,0],
    [363,530,553,563,592,1],[375,556,562,565,620,1],[387,542,562,612,620,1],[399,568,610,677,677,1],[411,590,628,675,677,0],[423,460,592,632,654,0],
    [435,518,535,596,628,0],[447,508,519,536,594,0],[459,516,520,557,570,1],[471,322,325,554,602,0],[483,320,325,497,530,1],[495,448,454,500,580,0],
    [507,430,454,464,534,0],[519,350,406,454,470,0],[531,378,409,420,432,1],[543,384,416,443,443,1],[555,416,428,441,442,0],[567,378,388,432,436,0],
    [579,362,364,389,390,0],[591,364,364,412,426,1],[603,408,409,459,462,1],[615,392,436,458,498,0],[627,360,370,436,438,0],[639,310,341,373,420,0],
    [651,322,343,402,438,1],[663,280,286,402,406,0],[675,238,290,293,330,1],[687,182,259,293,362,0],[699,255,256,262,392,0],[711,124,133,250,290,0],
    [723,128,130,188,256,1],[735,98,103,190,210,0],[747,100,106,146,190,1],[759,84,152,200,204,1],[771,112,176,203,218,0],[783,166,176,185,214,1],
    [795,130,184,218,226,0],[807,166,172,221,222,1],[819,160,175,221,234,0],[831,156,175,215,246,1],[843,162,214,248,248,1],[855,248,248,275,280,1],
    [867,270,272,273,278,0],[879,252,272,310,312,1],[891,276,310,323,348,1],[903,224,229,319,368,0],[915,198,232,310,312,1],[927,150,223,311,326,0],
    [939,170,194,224,296,0],[951,95,109,196,246,0],[963,-60,-60,112,150,0]
  ]},
  { ox: 1300, oy: 440, s: 3, rows: [
    [520,246,283,508,596,0],[532,160,270,290,356,0],[544,235,253,270,312,0],[556,247,256,287,318,1],[568,165,168,291,294,0],[580,145,154,178,230,0],
    [592,97,103,160,170,0],[604,112,118,233,280,1],[616,153,176,218,224,0],[628,178,178,268,290,1],[640,198,250,266,288,0],[652,232,250,268,288,1],
    [664,240,265,275,288,1],[676,228,265,275,275,0],[688,230,235,265,272,0],[700,210,235,263,272,1],[712,232,259,356,414,1],[724,310,355,434,438,1]
  ]}
];

var black = "", white = "";
function box(x, y, w, h) { return "M" + x + " " + y + "h" + w + "v" + h + "h" + (-w) + "z"; }

groups.forEach(function (g) {
  g.rows.forEach(function (r) {
    var x = g.s === 1 ? r[0] : g.ox + Math.floor(r[0] / g.s);
    var y = function (v) { return Math.round(g.oy + v / g.s); };
    var hi = y(r[1]), top = y(r[2]), bot = y(r[3]), lo = y(r[4]);
    if (bot <= top) bot = top + 1;
    black += box(x, hi, 1, Math.max(lo - hi, 1));
    black += box(x - 1, top, 3, bot - top + 1);
    if (!r[5] && bot - top > 1) white += box(x, top + 1, 1, bot - top - 1);
  });
});

var grid = "";
for (var gx = 349; gx <= 1597; gx += 96) {
  grid += '<line x1="' + (gx + 0.5) + '" y1="106" x2="' + (gx + 0.5) + '" y2="929" class="vg"/>';
}

document.getElementById("chart").innerHTML =
  grid +
  '<line x1="329" y1="584.5" x2="1855" y2="584.5" class="pl"/>' +
  '<line x1="329" y1="308.5" x2="1855" y2="308.5" class="sl"/>' +
  '<line x1="329" y1="767.5" x2="1855" y2="767.5" class="bl"/>' +
  '<path d="' + black + '" class="cb"/>' +
  '<path d="' + white + '" class="cw"/>' +
  '<text x="338" y="765" class="ot">#489967406 buy 0.06</text>' +
  '<text x="338" y="306" class="ot">#489967407 sell 0.01</text>';
```
